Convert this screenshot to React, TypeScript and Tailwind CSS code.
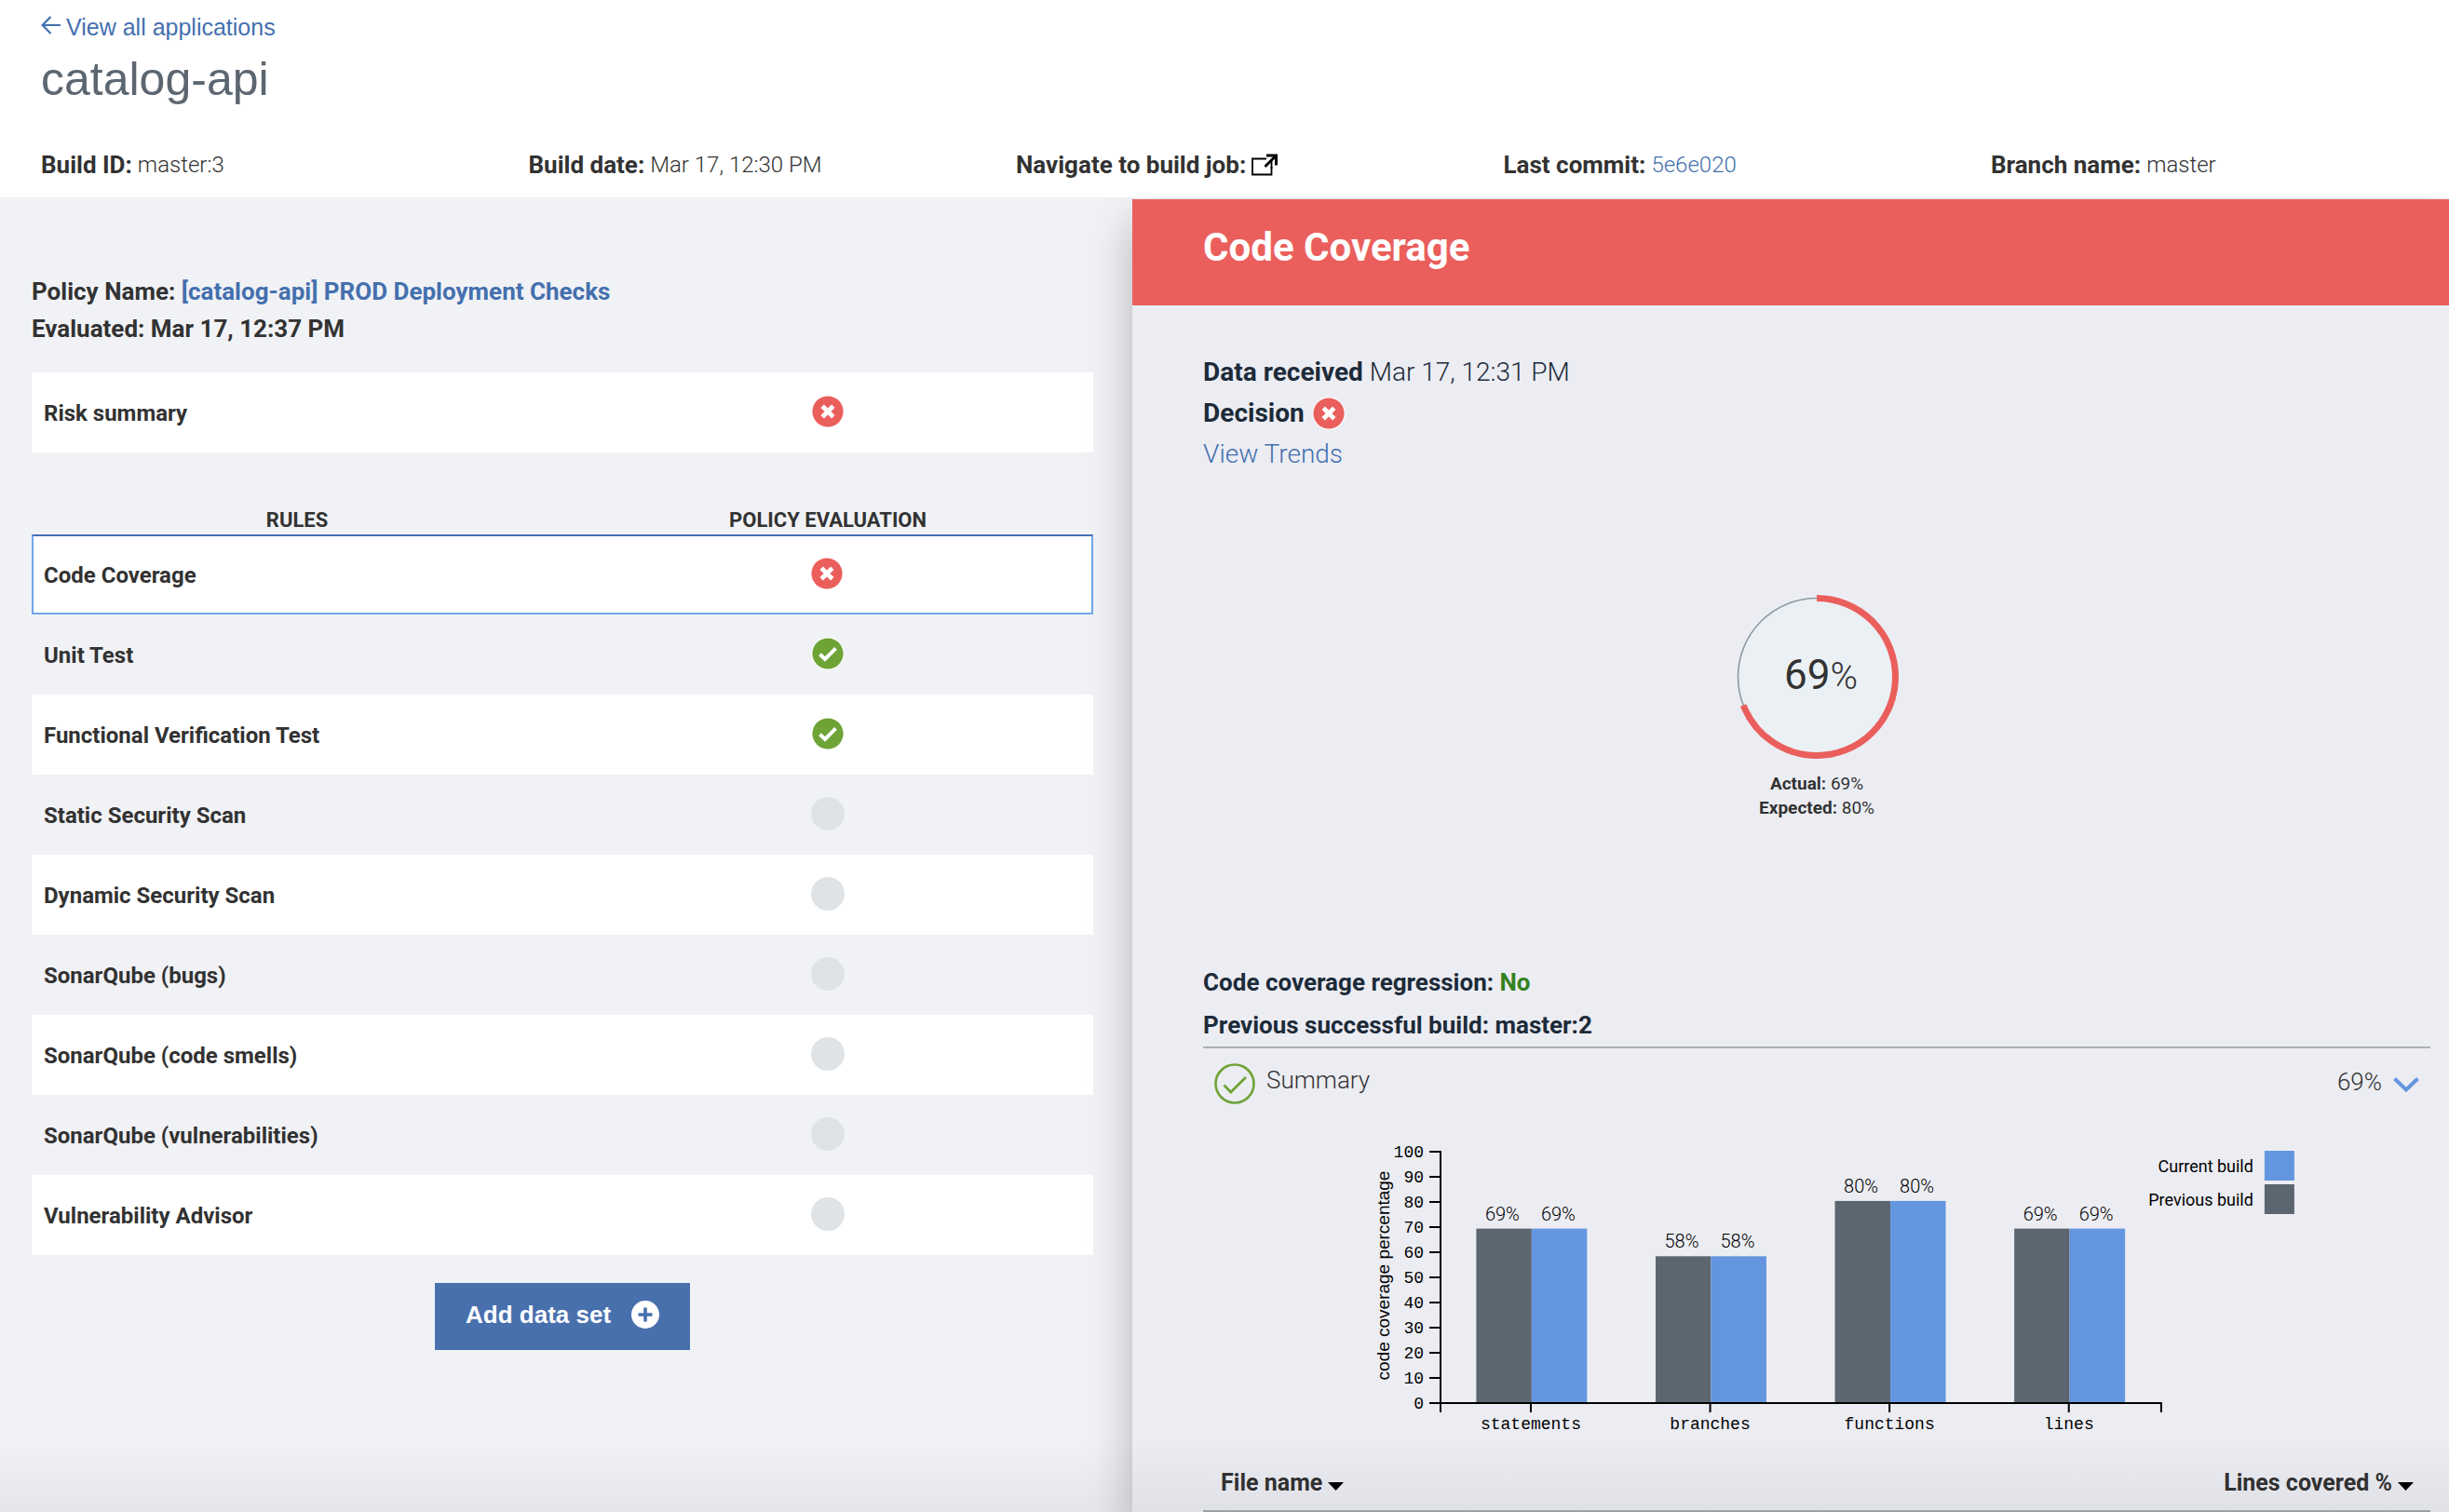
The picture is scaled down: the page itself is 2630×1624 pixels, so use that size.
import type { ReactNode } from "react";

type Status = "fail" | "pass" | "none";

const rules: { name: string; status: Status }[] = [
  { name: "Code Coverage", status: "fail" },
  { name: "Unit Test", status: "pass" },
  { name: "Functional Verification Test", status: "pass" },
  { name: "Static Security Scan", status: "none" },
  { name: "Dynamic Security Scan", status: "none" },
  { name: "SonarQube (bugs)", status: "none" },
  { name: "SonarQube (code smells)", status: "none" },
  { name: "SonarQube (vulnerabilities)", status: "none" },
  { name: "Vulnerability Advisor", status: "none" },
];

const groups = [
  { name: "statements", label: "69%", value: 69.4 },
  { name: "branches", label: "58%", value: 58.4 },
  { name: "functions", label: "80%", value: 80.4 },
  { name: "lines", label: "69%", value: 69.4 },
];

function StatusIcon({ status }: { status: Status }) {
  if (status === "none") {
    return (
      <svg viewBox="0 0 36 36" className="size-9" role="img" aria-label="Not evaluated">
        <circle cx="18" cy="18" r="18" fill="#dfe3e6" />
      </svg>
    );
  }
  return (
    <svg viewBox="0 0 36 36" className="size-9" role="img" aria-label={status === "fail" ? "Failed" : "Passed"}>
      <circle cx="18" cy="18" r="17.6" fill="#fff" />
      <circle cx="18" cy="18" r="16.6" fill={status === "fail" ? "#ea5f5c" : "#6ea336"} />
      {status === "fail" ? (
        <path d="M12.2 12.2 23.8 23.8M23.8 12.2 12.2 23.8" stroke="#fff" strokeWidth="4.8" fill="none" />
      ) : (
        <path d="M9.5 18.7 15 23.9 26.5 12.4" stroke="#fff" strokeWidth="4" fill="none" />
      )}
    </svg>
  );
}

function Fact({ label, children }: { label: string; children: ReactNode }) {
  return (
    <div className="flex items-center gap-1.5 text-[26px] leading-8 text-[#323232]">
      <dt className="font-bold">{label}</dt>
      <dd className="text-[24px] font-light">{children}</dd>
    </div>
  );
}

function Gauge() {
  const circumference = 2 * Math.PI * 84.5;
  return (
    <svg viewBox="0 0 178 178" className="size-[178px]" role="img" aria-label="69%">
      <circle cx="89" cy="89" r="84.5" fill="#ebf0f4" stroke="#8c9ba5" strokeWidth="1.6" />
      <circle
        cx="89"
        cy="89"
        r="84.5"
        fill="none"
        stroke="#ea5f5c"
        strokeWidth="7"
        strokeDasharray={`${circumference * 0.69} ${circumference}`}
        transform="rotate(-90 89 89)"
      />
      <text x="54" y="102" fontSize="44" fill="#323232">
        69<tspan fontSize="40" fontWeight="300">%</tspan>
      </text>
    </svg>
  );
}

function CoverageChart() {
  const base = 282;
  return (
    <svg viewBox="0 0 1318 320" className="w-full" role="img" aria-label="Code coverage percentage by build">
      <g fontFamily="'Liberation Mono', monospace" fontSize="18" fill="#000">
        {Array.from({ length: 11 }, (_, i) => (
          <g key={i}>
            <path d={`M243 ${base - i * 27}h12`} stroke="#000" strokeWidth="2" />
            <text x="237" y={base + 6 - i * 27} textAnchor="end">
              {i * 10}
            </text>
          </g>
        ))}
        {groups.map((g, i) => (
          <text key={g.name} x={352 + i * 192.6} y="310" textAnchor="middle">
            {g.name}
          </text>
        ))}
      </g>
      {groups.map((g, i) => {
        const x = 293.4 + i * 192.6;
        const h = g.value * 2.7;
        return (
          <g key={g.name}>
            <rect x={x} y={base - h} width="59.5" height={h} fill="#5c6670" />
            <rect x={x + 59.5} y={base - h} width="59.5" height={h} fill="#6496df" />
            <g fontSize="20" fontWeight="300" textAnchor="middle">
              <text x={x + 28} y={base - h - 9}>{g.label}</text>
              <text x={x + 88} y={base - h - 9}>{g.label}</text>
            </g>
          </g>
        );
      })}
      <path
        d={`M255 11V${base + 10}M255 ${base}H1029V${base + 10}M352 ${base}v10M544.6 ${base}v10M737.2 ${base}v10M929.8 ${base}v10`}
        stroke="#000"
        strokeWidth="2"
        fill="none"
      />
      <text
        transform="translate(200 145) rotate(-90)"
        textAnchor="middle"
        fontFamily="'Liberation Sans', Arial, sans-serif"
        fontSize="19"
      >
        code coverage percentage
      </text>
      <g fontSize="18" textAnchor="end">
        <rect x="1140" y="11" width="32" height="32" fill="#6496df" />
        <text x="1128" y="34">Current build</text>
        <rect x="1140" y="47" width="32" height="32" fill="#5c6670" />
        <text x="1128" y="70">Previous build</text>
      </g>
    </svg>
  );
}

function SortArrow() {
  return (
    <svg viewBox="0 0 17 9" className="mt-2 h-[9px] w-[17px]" aria-hidden="true">
      <path d="M0 0h17L8.500 9z" fill="#000" />
    </svg>
  );
}

export default function App() {
  return (
    <div className="relative flex min-h-screen flex-col bg-white font-['Roboto',sans-serif]">
      <header className="pt-[13px] pb-[19px] pl-11">
        <a href="#applications" className="flex w-fit items-center gap-[6px] font-['Liberation_Sans',Arial,sans-serif] text-[25px] leading-8 text-[#4470ae]">
          <svg viewBox="0 0 21 20" className="-mt-1 h-5 w-[21px]" fill="none" stroke="currentColor" strokeWidth="2.2" aria-hidden="true">
            <path d="M10.500 1 1.600 10l8.900 9M1.600 10H21" />
          </svg>
          View all applications
        </a>
        <h1 className="mt-3 font-['Liberation_Sans',Arial,sans-serif] text-[50px] leading-14 text-[#5c6670]">catalog-api</h1>
        <dl className="mt-12 grid grid-cols-[repeat(4,1fr)_492px]">
          <Fact label="Build ID:">master:3</Fact>
          <Fact label="Build date:">Mar 17, 12:30 PM</Fact>
          <Fact label="Navigate to build job:">
            <a href="#build-job" aria-label="Open build job">
              <svg viewBox="0 0 28 24" className="h-6 w-7" fill="none" stroke="#000" aria-hidden="true">
                <path d="M16 5.500H1v17h20.500V14" strokeWidth="1.800" />
                <path d="M21.500 8v8" strokeWidth="1.800" />
                <path d="M16 2h10.500v10.500M26 2.500 14.500 14" strokeWidth="3" />
              </svg>
            </a>
          </Fact>
          <Fact label="Last commit:">
            <a href="#commit" className="text-[#4470ae]">5e6e020</a>
          </Fact>
          <Fact label="Branch name:">master</Fact>
        </dl>
      </header>

      <main className="flex flex-1 overflow-hidden bg-[#f1f2f6]">
        <section className="w-[46.24%] shrink-0 pt-[81px] pr-[42px] pl-[34px] text-[#323232]">
          <div className="text-[26px] leading-10 font-bold">
            <p>
              Policy Name: <a href="#policy" className="text-[#4470ae]">[catalog-api] PROD Deployment Checks</a>
            </p>
            <p>Evaluated: Mar 17, 12:37 PM</p>
          </div>

          <div className="mt-[27px] grid h-[86px] grid-cols-2 items-center bg-white text-[24px] font-bold">
            <span className="pt-0.5 pl-[13px]">Risk summary</span>
            <span className="flex justify-center pb-0.5"><StatusIcon status="fail" /></span>
          </div>

          <table className="mt-[58px] w-full table-fixed border-separate border-spacing-0 text-[24px] font-bold">
            <thead>
              <tr className="text-[22px] leading-[30px]">
                <th scope="col" className="p-0">RULES</th>
                <th scope="col" className="p-0">POLICY EVALUATION</th>
              </tr>
            </thead>
            <tbody>
              {rules.map((rule, i) => (
                <tr key={rule.name} className={i % 2 === 0 ? "h-[86px] bg-white" : "h-[86px]"}>
                  <td className={i === 0 ? "border-t-2 border-b-2 border-l-2 border-t-[#4470ae] border-b-[#6fa6ea] border-l-[#6fa6ea] pt-0.5 pr-0 pb-0 pl-[11px]" : "pt-0.5 pr-0 pb-0 pl-[13px]"}>
                    {rule.name}
                  </td>
                  <td className={i === 0 ? "border-t-2 border-r-2 border-b-2 border-t-[#4470ae] border-r-[#6fa6ea] border-b-[#6fa6ea] px-0 pt-0 pb-0.5" : "px-0 pt-0 pb-0.5"}>
                    <span className="flex justify-center"><StatusIcon status={rule.status} /></span>
                  </td>
                </tr>
              ))}
            </tbody>
          </table>

          <button type="button" className="mx-auto mt-[30px] flex h-[72px] items-center gap-[22px] bg-[#4870ad] px-[33px] pb-1 font-['Liberation_Sans',Arial,sans-serif] text-[26px] font-bold text-white">
            Add data set
            <svg viewBox="0 0 30 30" className="size-[30px]" aria-hidden="true">
              <circle cx="15" cy="15" r="15" fill="#fff" />
              <path d="M15 7.500v15M7.500 15h15" stroke="#4870ad" strokeWidth="3.600" />
            </svg>
          </button>
        </section>

        <section className="mt-0.5 min-w-0 flex-1 bg-[#ecedf3] text-[#1c2b39] shadow-[0_24px_44px_rgba(0,0,0,0.26)]">
          <h2 className="bg-[#ea5f5c] pt-6 pr-5 pb-[34px] pl-[76px] text-[42px] leading-14 font-bold text-white">Code Coverage</h2>
          <div className="pt-[50px] pr-5 pl-[76px]">
            <div className="text-[28px] leading-11">
              <p>
                <b>Data received</b> <span className="font-light">Mar 17, 12:31 PM</span>
              </p>
              <p className="flex items-center gap-2">
                <b>Decision</b>
                <StatusIcon status="fail" />
              </p>
              <a href="#trends" className="block w-fit font-light text-[#4470ae]">View Trends</a>
            </div>

            <div className="mt-32 flex flex-col items-center text-[19px] leading-[26px] text-[#323232]">
              <Gauge />
              <p className="mt-[13px]"><b>Actual:</b> 69%</p>
              <p><b>Expected:</b> 80%</p>
            </div>

            <div className="mt-[151px] border-b-2 border-[#acb0b5] text-[26px] leading-[46px] font-bold">
              <p>
                Code coverage regression: <span className="text-[#34811f]">No</span>
              </p>
              <p>Previous successful build: master:2</p>
            </div>

            <button type="button" className="flex w-full items-start px-3 pt-4 pb-[39px] text-[26px] font-light text-[#323232]">
              <svg viewBox="0 0 44 44" className="size-11" fill="none" stroke="#6ea336" aria-hidden="true">
                <circle cx="22" cy="22" r="20.500" strokeWidth="2.600" />
                <path d="M10.500 23.500 17.800 31 34 15" strokeWidth="2.800" />
              </svg>
              <span className="ml-3 leading-9">Summary</span>
              <span className="ml-auto leading-10">69%</span>
              <svg viewBox="0 0 28 18" className="mt-[14px] ml-3 h-[18px] w-7" fill="none" stroke="#6496df" strokeWidth="4" aria-hidden="true">
                <path d="M1.500 2.500 14 14.500 26.500 2.500" />
              </svg>
            </button>

            <CoverageChart />

            <table className="mt-[28px] w-full border-b-2 border-[#a6a9ad] text-[25px] leading-10 text-[#323232]">
              <thead>
                <tr>
                  <th scope="col" className="px-0 pt-0 pb-[9px] pl-[19px]">
                    <button type="button" className="flex items-center gap-1.5 font-bold">File name <SortArrow /></button>
                  </th>
                  <th scope="col" className="px-0 pt-0 pr-[18px] pb-[9px]">
                    <button type="button" className="ml-auto flex items-center gap-1.5 font-bold">Lines covered % <SortArrow /></button>
                  </th>
                </tr>
              </thead>
            </table>
          </div>
        </section>
      </main>
      <div className="pointer-events-none absolute inset-x-0 bottom-0 h-20 bg-linear-to-b from-transparent to-black/5" />
    </div>
  );
}
